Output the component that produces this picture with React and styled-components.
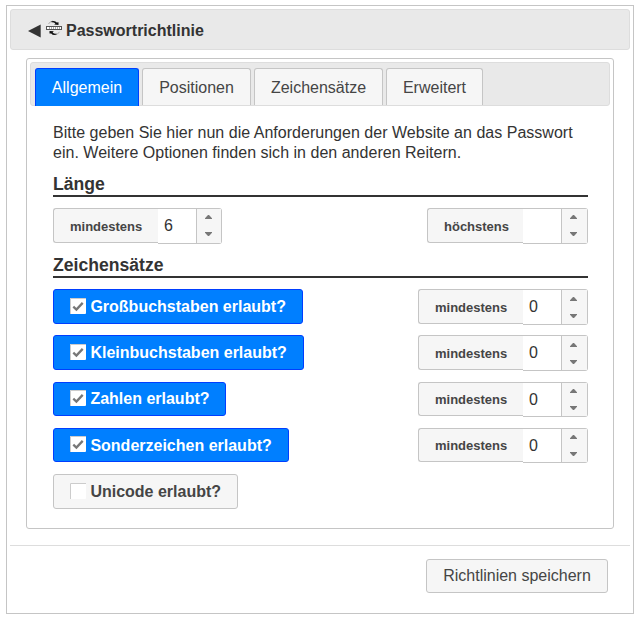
import React, { useState } from "react";
import styled, { createGlobalStyle } from "styled-components";

const GlobalStyle = createGlobalStyle`
  *, *::before, *::after { box-sizing: border-box; }
  body {
    margin: 0;
    background: #fff;
    color: #333;
    font: 16px/20px "Liberation Sans", Arial, sans-serif;
  }
`;

const Dialog = styled.div`
  width: 628px;
  height: 609px;
  margin: 5px 0 0 6px;
  padding: 3px;
  border: 1px solid #c5c5c5;
  background: #fff;
`;

const TitleBar = styled.header`
  display: flex;
  align-items: center;
  height: 41px;
  padding: 2px 0 0 17px;
  border: 1px solid #ddd;
  border-radius: 3px;
  background: #e9e9e9;
`;

const BackArrow = styled.svg`
  display: block;
  width: 13px;
  height: 14px;
`;

const PolicyIcon = styled.svg`
  display: block;
  width: 16px;
  height: 16px;
  margin: 0 4px 5px 5px;
`;

const Title = styled.h1`
  margin: 0;
  font-size: 16px;
  line-height: 20px;
`;

const TabPanel = styled.section`
  height: 471px;
  margin: 8px 16px 0;
  padding: 3px;
  border: 1px solid #c5c5c5;
  border-radius: 3px;
`;

const TabList = styled.nav`
  display: flex;
  gap: 3px;
  height: 44px;
  padding: 5px 4px 0;
  border: 1px solid #ddd;
  border-radius: 3px;
  background: #e9e9e9;
`;

const Tab = styled.button`
  width: ${(p) => p.$width}px;
  height: ${(p) => (p.$active ? 38 : 37)}px;
  padding: 1px 0 0;
  border: 1px solid ${(p) => (p.$active ? "#003eff" : "#c5c5c5")};
  border-bottom: 0;
  border-radius: 3px 3px 0 0;
  background: ${(p) => (p.$active ? "#007fff" : "#f6f6f6")};
  color: ${(p) => (p.$active ? "#fff" : "#454545")};
  font: inherit;
  white-space: nowrap;
`;

const Content = styled.div`
  padding: 17px 22px 0 23px;
`;

const Intro = styled.p`
  margin: 0;
  letter-spacing: 0.02px;
  white-space: nowrap;
`;

const SectionHeading = styled.h2`
  height: 23px;
  margin: ${(p) => p.$gap}px 0 0;
  border-bottom: 2px solid #333;
  font-size: 17.6px;
  line-height: 20px;
`;

const Row = styled.div`
  display: flex;
  justify-content: space-between;
  align-items: flex-start;
  height: 35px;
  margin-top: ${(p) => p.$gap}px;
`;

const Spinner = styled.div`
  display: flex;
  align-items: flex-start;
`;

const SpinnerLabel = styled.label`
  width: ${(p) => p.$width}px;
  height: ${(p) => p.$height}px;
  padding: ${(p) => p.$height - 28}px 0 0 16px;
  border: 1px solid #c5c5c5;
  border-right: 0;
  border-radius: 3px 0 0 3px;
  background: #f6f6f6;
  color: #454545;
  font-size: 13px;
  font-weight: bold;
  line-height: 21px;
`;

const SpinnerBox = styled.div`
  display: flex;
  width: ${(p) => p.$width}px;
  height: ${(p) => p.$height}px;
  border: 1px solid #c5c5c5;
  border-left: 0;
  border-radius: 0 3px 3px 0;
  background: #fff;
`;

const SpinnerInput = styled.input`
  flex: none;
  width: 38px;
  height: 33px;
  padding: 0 0 0 6px;
  border: 0;
  outline: 0;
  background: transparent;
  color: #333;
  font: inherit;
`;

const SpinnerButtons = styled.div`
  display: flex;
  flex: 1;
  flex-direction: column;
  gap: 13px;
  padding: ${(p) => p.$top}px 0 0 8px;
  border-left: 1px solid #c5c5c5;
  background: #f6f6f6;
`;

const StepButton = styled.button`
  width: 7px;
  height: 4px;
  padding: 0;
  border: 0;
  background: transparent;

  svg { display: block; }
`;

const Toggle = styled.button`
  display: flex;
  width: ${(p) => p.$width}px;
  height: ${(p) => p.$height}px;
  padding: 0 0 0 16px;
  border: 1px solid ${(p) => (p.$on ? "#003eff" : "#c5c5c5")};
  border-radius: 3px;
  background: ${(p) => (p.$on ? "#007fff" : "#f6f6f6")};
  color: ${(p) => (p.$on ? "#fff" : "#454545")};
  font: bold 16px/20px "Liberation Sans", Arial, sans-serif;
  white-space: nowrap;
`;

const CheckBox = styled.svg`
  flex: none;
  width: 16px;
  height: 16px;
  margin: ${(p) => p.$drop}px 4.4px 0 0;
`;

const ToggleText = styled.span`
  margin-top: ${(p) => p.$drop}px;
`;

const Footer = styled.footer`
  display: flex;
  justify-content: flex-end;
  margin-top: 16px;
  padding: 13px 22px 0 0;
  border-top: 1px solid #ddd;
`;

const SaveButton = styled.button`
  width: 182px;
  height: 34px;
  padding: 0;
  border: 1px solid #c5c5c5;
  border-radius: 3px;
  background: #f6f6f6;
  color: #454545;
  font: inherit;
  white-space: nowrap;
`;

const tabs = [
  { label: "Allgemein", width: 104 },
  { label: "Positionen", width: 109 },
  { label: "Zeichensätze", width: 129 },
  { label: "Erweitert", width: 97 },
];

const charSets = [
  { label: "Großbuchstaben erlaubt?", width: 250, height: 35, gap: 11, box: 8, text: 7, stepTop: 7, on: true },
  { label: "Kleinbuchstaben erlaubt?", width: 251, height: 35, gap: 11, box: 8, text: 7, stepTop: 7, on: true },
  { label: "Zahlen erlaubt?", width: 173, height: 34, gap: 12, box: 7, text: 6, stepTop: 6, on: true },
  { label: "Sonderzeichen erlaubt?", width: 236, height: 34, gap: 11, box: 7, text: 7, stepTop: 6, on: true },
  { label: "Unicode erlaubt?", width: 185, height: 35, gap: 11, box: 8, text: 7, on: false },
];

function NumberSpinner({ label, labelWidth, boxWidth, height = 35, stepTop = 6, initial = "" }) {
  const [value, setValue] = useState(initial);
  const step = (delta) => setValue(String(Math.max(0, Number(value) + delta)));
  return (
    <Spinner>
      <SpinnerLabel $width={labelWidth} $height={height}>{label}</SpinnerLabel>
      <SpinnerBox $width={boxWidth} $height={height + 1}>
        <SpinnerInput aria-label={label} value={value} onChange={(e) => setValue(e.target.value)} />
        <SpinnerButtons $top={stepTop}>
          <StepButton aria-label="+" onClick={() => step(1)}>
            <svg width="7" height="4" viewBox="0 0 7 4"><path d="M3 0H4L7 3.2V4H0V3.2Z" fill="#777" /></svg>
          </StepButton>
          <StepButton aria-label="-" onClick={() => step(-1)}>
            <svg width="7" height="4" viewBox="0 0 7 4"><path d="M0 0H7V.8L4 4H3L0 .8Z" fill="#777" /></svg>
          </StepButton>
        </SpinnerButtons>
      </SpinnerBox>
    </Spinner>
  );
}

function CharSetToggle({ set }) {
  const [on, setOn] = useState(set.on);
  return (
    <Toggle $on={on} $width={set.width} $height={set.height} onClick={() => setOn(!on)}>
      <CheckBox viewBox="0 0 16 16" $drop={set.box}>
        <rect width="16" height="16" rx="1" fill="#fff" />
        <path d="M.5 16V.5H16" fill="none" stroke="#ccc" />
        {on && <path d="M3.3 8.7 6.4 11.6 12.7 4.9" fill="none" stroke="#777" strokeWidth="2.3" />}
      </CheckBox>
      <ToggleText $drop={set.text}>{set.label}</ToggleText>
    </Toggle>
  );
}

export default function App() {
  const [active, setActive] = useState(0);
  return (
    <>
      <GlobalStyle />
      <Dialog>
        <TitleBar>
          <BackArrow viewBox="0 0 13 14">
            <path d="M0 7 12.7.5V13.5Z" fill="#333" />
          </BackArrow>
          <PolicyIcon viewBox="0 0 16 16">
            <path d="M2.5 4Q4 1.2 7 1" fill="none" stroke="#999" strokeWidth=".8" />
            <path d="M5.5 1.3Q9 .1 10.8 2.4L12.5 2.2V4.9L8.2 4.6 9.4 3.4Q8 2 5.5 2.2Z" fill="#111" />
            <rect x=".5" y="6.5" width="15" height="3" fill="#fff" stroke="#555" />
            <path d="M3.5 7v2M5.5 7v2M7.5 7v2M9.5 7v2M11.5 7v2M13.5 7v2" stroke="#aaa" />
            <path d="M13.5 11.8Q12 14.6 9 14.8" fill="none" stroke="#999" strokeWidth=".8" />
            <path d="M10.5 14.5Q7 15.7 5.2 13.4L3.5 13.6V10.9L7.8 11.2 6.6 12.4Q8 13.8 10.5 13.6Z" fill="#111" />
          </PolicyIcon>
          <Title>Passwortrichtlinie</Title>
        </TitleBar>
        <TabPanel>
          <TabList>
            {tabs.map((tab, i) => (
              <Tab key={tab.label} $width={tab.width} $active={i === active} onClick={() => setActive(i)}>
                {tab.label}
              </Tab>
            ))}
          </TabList>
          <Content>
            <Intro>
              Bitte geben Sie hier nun die Anforderungen der Website an das Passwort
              <br />
              ein. Weitere Optionen finden sich in den anderen Reitern.
            </Intro>
            <SectionHeading $gap={11}>Länge</SectionHeading>
            <Row $gap={11}>
              <NumberSpinner label="mindestens" labelWidth={105} boxWidth={64} initial="6" />
              <NumberSpinner label="höchstens" labelWidth={96} boxWidth={65} />
            </Row>
            <SectionHeading $gap={12}>Zeichensätze</SectionHeading>
            {charSets.map((set) => (
              <Row key={set.label} $gap={set.gap}>
                <CharSetToggle set={set} />
                {set.on && (
                  <NumberSpinner
                    label="mindestens"
                    labelWidth={105}
                    boxWidth={65}
                    height={set.height}
                    stepTop={set.stepTop}
                    initial="0"
                  />
                )}
              </Row>
            ))}
          </Content>
        </TabPanel>
        <Footer>
          <SaveButton>Richtlinien speichern</SaveButton>
        </Footer>
      </Dialog>
    </>
  );
}
